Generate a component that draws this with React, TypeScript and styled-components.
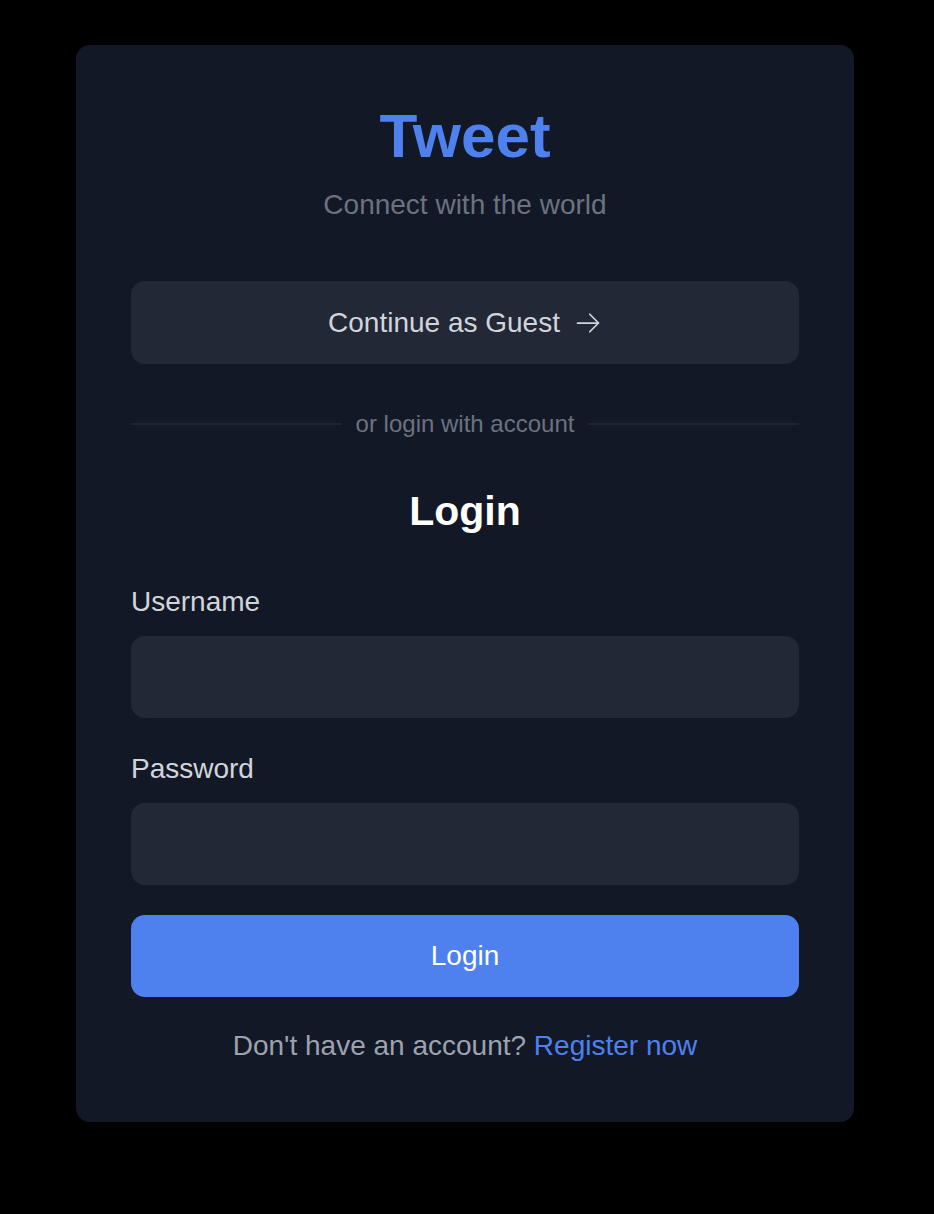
import React from "react";
import styled, { createGlobalStyle } from "styled-components";

const GlobalStyle = createGlobalStyle`
  html, body {
    margin: 0;
    padding: 0;
    background: #000000;
    font-family: "Liberation Sans", Arial, sans-serif;
  }
  * { box-sizing: border-box; }
`;

const Page = styled.div`
  min-height: 1214px;
  display: flex;
  justify-content: center;
  align-items: flex-start;
  padding: 45px 4px 0 0;
  background: #000000;
`;

const Card = styled.div`
  width: 778px;
  background: #131826;
  border-radius: 14px;
  padding: 55px 55px 55px;
  display: flex;
  flex-direction: column;
`;

const Brand = styled.h1`
  margin: 0;
  text-align: center;
  font-size: 62px;
  line-height: 72px;
  font-weight: 700;
  color: #4e81ee;
`;

const Tagline = styled.p`
  margin: 12px 0 0;
  text-align: center;
  font-size: 28px;
  line-height: 42px;
  color: #6b7280;
`;

const GuestButton = styled.button`
  margin-top: 55px;
  height: 83px;
  width: 100%;
  border: none;
  border-radius: 14px;
  background: #222836;
  color: #d1d5db;
  font-family: inherit;
  font-size: 28px;
  line-height: 42px;
  display: flex;
  align-items: center;
  justify-content: center;
  gap: 14px;
  cursor: pointer;
`;

const Divider = styled.div`
  margin-top: 42px;
  height: 36px;
  display: flex;
  align-items: center;
  gap: 14px;
  &::before,
  &::after {
    content: "";
    flex: 1;
    height: 2px;
    background: #1f2533;
  }
`;

const DividerText = styled.span`
  font-size: 24px;
  line-height: 36px;
  color: #6b7280;
`;

const Heading = styled.h2`
  margin: 44px 0 0;
  text-align: center;
  font-size: 41px;
  line-height: 50px;
  font-weight: 700;
  color: #ffffff;
`;

const Form = styled.form`
  margin-top: 45px;
  display: flex;
  flex-direction: column;
  gap: 30px;
`;

const Field = styled.div`
  display: flex;
  flex-direction: column;
  gap: 13px;
`;

const Label = styled.label`
  font-size: 28px;
  line-height: 42px;
  color: #d1d5db;
`;

const Input = styled.input`
  height: 82px;
  width: 100%;
  border: none;
  outline: none;
  border-radius: 14px;
  background: #222836;
  color: #e5e7eb;
  font-family: inherit;
  font-size: 28px;
  padding: 0 24px;
`;

const SubmitButton = styled.button`
  height: 82px;
  width: 100%;
  border: none;
  border-radius: 14px;
  background: #4e81ee;
  color: #ffffff;
  font-family: inherit;
  font-size: 28px;
  line-height: 42px;
  cursor: pointer;
`;

const Footer = styled.p`
  margin: 28px 0 0;
  text-align: center;
  font-size: 28px;
  line-height: 42px;
  color: #9ca3af;
`;

const Link = styled.a`
  color: #4e81ee;
  text-decoration: none;
`;

const ArrowIcon = () => (
  <svg
    width="28"
    height="28"
    viewBox="0 0 24 24"
    fill="none"
    stroke="currentColor"
    strokeWidth={1.5}
    strokeLinecap="round"
    strokeLinejoin="round"
  >
    <path d="M13.5 4.5 21 12m0 0-7.5 7.5M21 12H3" />
  </svg>
);

export default function App() {
  return (
    <>
      <GlobalStyle />
      <Page>
        <Card>
          <Brand>Tweet</Brand>
          <Tagline>Connect with the world</Tagline>
          <GuestButton type="button">
            Continue as Guest
            <ArrowIcon />
          </GuestButton>
          <Divider>
            <DividerText>or login with account</DividerText>
          </Divider>
          <Heading>Login</Heading>
          <Form onSubmit={(e) => e.preventDefault()}>
            <Field>
              <Label htmlFor="username">Username</Label>
              <Input id="username" type="text" />
            </Field>
            <Field>
              <Label htmlFor="password">Password</Label>
              <Input id="password" type="password" />
            </Field>
            <SubmitButton type="submit">Login</SubmitButton>
          </Form>
          <Footer>
            Don't have an account? <Link href="#">Register now</Link>
          </Footer>
        </Card>
      </Page>
    </>
  );
}
